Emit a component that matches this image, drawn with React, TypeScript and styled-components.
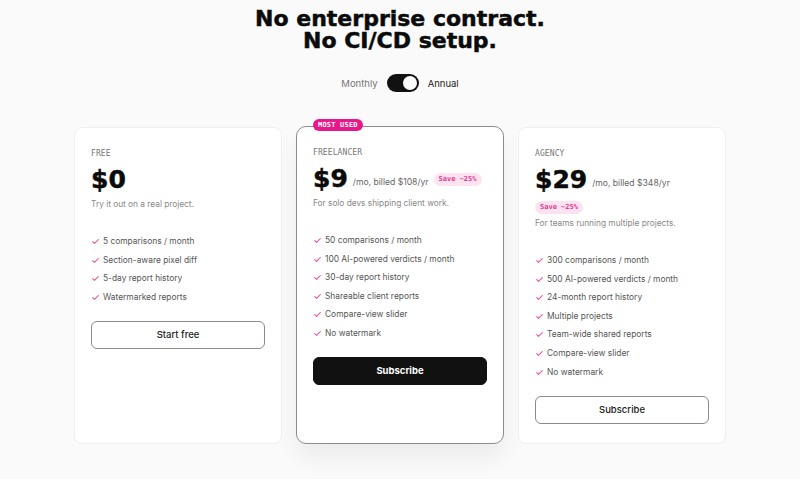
import React from "react";
import styled, { createGlobalStyle } from "styled-components";

const Global = createGlobalStyle`
  html, body { margin: 0; padding: 0; background: #fafafa; }
  body { font-family: Inter, "Noto Sans", sans-serif; color: #111; -webkit-font-smoothing: antialiased; }
  * { box-sizing: border-box; }
`;

const Page = styled.main`
  width: 800px;
  height: 479px;
  overflow: hidden;
  display: flex;
  flex-direction: column;
  align-items: center;
  padding-top: 8px;
`;

const Title = styled.h1`
  margin: 0;
  display: flex;
  flex-direction: column;
  align-items: center;
  font-family: "DejaVu Sans", sans-serif;
  font-weight: 900;
  font-size: 22px;
  text-align: center;
  color: #0b0b0b;
  -webkit-text-stroke: 0.5px #0b0b0b;
`;

const TitleLine = styled.span`
  display: block;
  line-height: 22px;
`;

const ToggleRow = styled.div`
  display: flex;
  align-items: center;
  gap: 9px;
  margin-top: 22px;
  font-size: 9.5px;
`;

const ToggleLabel = styled.span<{ $active?: boolean }>`
  color: ${(p) => (p.$active ? "#222" : "#777")};
`;

const Switch = styled.div`
  width: 32px;
  height: 18px;
  border-radius: 9px;
  background: #111;
  position: relative;
  &::after {
    content: "";
    position: absolute;
    right: 2px;
    top: 2px;
    width: 14px;
    height: 14px;
    border-radius: 50%;
    background: #fff;
  }
`;

const Grid = styled.section`
  display: grid;
  grid-template-columns: repeat(3, 208px);
  gap: 14px;
  margin-top: 35px;
  align-items: stretch;
`;

const Card = styled.article<{ $featured?: boolean }>`
  position: relative;
  background: #fff;
  border: 1px solid ${(p) => (p.$featured ? "#8c8c8c" : "#efefef")};
  border-radius: ${(p) => (p.$featured ? "10px" : "8px")};
  box-shadow: ${(p) => (p.$featured ? "0 14px 24px rgba(0,0,0,0.06)" : "none")};
  padding: 20px 16px 19px;
  margin-top: ${(p) => (p.$featured ? "-1px" : "0")};
  display: flex;
  flex-direction: column;
`;

const Badge = styled.span`
  position: absolute;
  top: -8px;
  left: 16px;
  background: #e8178a;
  color: #fff;
  font-family: "DejaVu Sans Mono", monospace;
  font-weight: 700;
  font-size: 7px;
  line-height: 12px;
  padding: 0 5px;
  border-radius: 6px;
  letter-spacing: 0.2px;
`;

const PlanName = styled.div`
  font-family: "DejaVu Sans Mono", monospace;
  font-size: 8px;
  line-height: 12px;
  color: #777;
  letter-spacing: 0.1px;
`;

const PriceRow = styled.div`
  display: flex;
  flex-wrap: wrap;
  align-items: center;
  column-gap: 5px;
  row-gap: 6px;
  margin-top: 5px;
`;

const Price = styled.span`
  font-family: "DejaVu Sans", sans-serif;
  font-weight: 900;
  font-size: 25px;
  line-height: 30px;
  color: #0b0b0b;
  -webkit-text-stroke: 0.5px #0b0b0b;
`;

const Period = styled.span`
  font-size: 8.6px;
  color: #666;
  margin-top: 5px;
`;

const Save = styled.span`
  font-family: "DejaVu Sans Mono", monospace;
  font-weight: 700;
  font-size: 7px;
  line-height: 13px;
  padding: 0 5px;
  border-radius: 7px;
  background: #fde3ef;
  color: #e2368f;
`;

const Desc = styled.p`
  margin: 3px 0 0;
  font-size: 8.3px;
  line-height: 13px;
  color: #888;
`;

const Features = styled.ul`
  list-style: none;
  margin: 24px 0 0;
  padding: 0;
  display: flex;
  flex-direction: column;
  gap: 5.6px;
`;

const Feature = styled.li`
  display: flex;
  align-items: center;
  gap: 6px;
  font-size: 8.4px;
  line-height: 13px;
  color: #555;
`;

const Check = styled.span`
  color: #ec2f86;
  font-size: 10px;
  width: 6px;
`;

const Button = styled.button<{ $primary?: boolean }>`
  margin-top: 17px;
  height: 28px;
  width: 100%;
  border-radius: 6px;
  border: 1px solid ${(p) => (p.$primary ? "#111" : "#8a8a8a")};
  background: ${(p) => (p.$primary ? "#111" : "#fff")};
  color: ${(p) => (p.$primary ? "#fff" : "#222")};
  font-family: Inter, sans-serif;
  font-size: 9.5px;
  font-weight: ${(p) => (p.$primary ? 700 : 500)};
  cursor: pointer;
`;

type Plan = {
  name: string;
  price: string;
  period?: string;
  save?: boolean;
  desc: string;
  features: string[];
  cta: string;
  featured?: boolean;
};

const plans: Plan[] = [
  {
    name: "FREE",
    price: "$0",
    desc: "Try it out on a real project.",
    features: ["5 comparisons / month", "Section-aware pixel diff", "5-day report history", "Watermarked reports"],
    cta: "Start free",
  },
  {
    name: "FREELANCER",
    price: "$9",
    period: "/mo, billed $108/yr",
    save: true,
    desc: "For solo devs shipping client work.",
    features: [
      "50 comparisons / month",
      "100 AI-powered verdicts / month",
      "30-day report history",
      "Shareable client reports",
      "Compare-view slider",
      "No watermark",
    ],
    cta: "Subscribe",
    featured: true,
  },
  {
    name: "AGENCY",
    price: "$29",
    period: "/mo, billed $348/yr",
    save: true,
    desc: "For teams running multiple projects.",
    features: [
      "300 comparisons / month",
      "500 AI-powered verdicts / month",
      "24-month report history",
      "Multiple projects",
      "Team-wide shared reports",
      "Compare-view slider",
      "No watermark",
    ],
    cta: "Subscribe",
  },
];

export default function App() {
  return (
    <Page>
      <Global />
      <Title>
        <TitleLine>No enterprise contract.</TitleLine>
        <TitleLine>No CI/CD setup.</TitleLine>
      </Title>
      <ToggleRow>
        <ToggleLabel>Monthly</ToggleLabel>
        <Switch />
        <ToggleLabel $active>Annual</ToggleLabel>
      </ToggleRow>
      <Grid>
        {plans.map((p) => (
          <Card key={p.name} $featured={p.featured}>
            {p.featured && <Badge>MOST USED</Badge>}
            <PlanName>{p.name}</PlanName>
            <PriceRow>
              <Price>{p.price}</Price>
              {p.period && <Period>{p.period}</Period>}
              {p.save && <Save>Save ~25%</Save>}
            </PriceRow>
            <Desc>{p.desc}</Desc>
            <Features>
              {p.features.map((f) => (
                <Feature key={f}>
                  <Check>✓</Check>
                  {f}
                </Feature>
              ))}
            </Features>
            <Button $primary={p.featured}>{p.cta}</Button>
          </Card>
        ))}
      </Grid>
    </Page>
  );
}
